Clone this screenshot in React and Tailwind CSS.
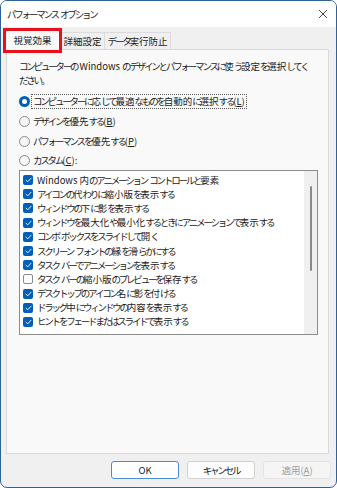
import { useState } from "react";

const items = [
  { label: "Windows 内のアニメーション コントロールと要素", on: true },
  { label: "アイコンの代わりに縮小版を表示する", on: true },
  { label: "ウィンドウの下に影を表示する", on: true },
  { label: "ウィンドウを最大化や最小化するときにアニメーションで表示する", on: true },
  { label: "コンボ ボックスをスライドして開く", on: true },
  { label: "スクリーン フォントの縁を滑らかにする", on: true },
  { label: "タスク バーでアニメーションを表示する", on: true },
  { label: "タスク バーの縮小版のプレビューを保存する", on: false },
  { label: "デスクトップのアイコン名に影を付ける", on: true },
  { label: "ドラッグ中にウィンドウの内容を表示する", on: true },
  { label: "ヒントをフェードまたはスライドで表示する", on: true },
];

const radios = [
  { label: "コンピューターに応じて最適なものを自動的に選択する", key: "L" },
  { label: "デザインを優先する", key: "B" },
  { label: "パフォーマンスを優先する", key: "P" },
  { label: "カスタム", key: "C", colon: true },
];

// かな部分だけ詰める (Yu Gothic UI のかなは幅が狭い)
function JP({ text }) {
  return text.split(/([\u3040-\u30ff。、]+)/).map((part, i) =>
    /^[\u3040-\u30ff。、]+$/.test(part) ? (
      <span key={i} className="tracking-[-2.2px]">
        {part}
      </span>
    ) : (
      part
    )
  );
}

function Radio({ checked }) {
  if (checked) {
    return (
      <span className="flex h-[11px] w-[11px] shrink-0 items-center justify-center rounded-full bg-[#005fb8]">
        <span className="h-[5px] w-[5px] rounded-full bg-white" />
      </span>
    );
  }
  return <span className="h-[11px] w-[11px] shrink-0 rounded-full border border-[#8a8a8a] bg-[#f6f6f6]" />;
}

function Check({ on }) {
  if (!on) {
    return <span className="h-[10px] w-[10px] shrink-0 rounded-[2px] border border-[#8a8a8a] bg-[#fbfbfb]" />;
  }
  return (
    <span className="flex h-[10px] w-[10px] shrink-0 items-center justify-center rounded-[2px] bg-[#005fb8]">
      <svg width="7" height="6" viewBox="0 0 7 6" fill="none">
        <path d="M1 3.2 L2.8 4.8 L6 1.2" stroke="white" strokeWidth="0.9" strokeLinecap="round" strokeLinejoin="round" />
      </svg>
    </span>
  );
}

export default function App() {
  const [mode, setMode] = useState(0);
  const [checks, setChecks] = useState(items.map((it) => it.on));

  return (
    <div className="h-[488px] w-[337px] bg-white font-['Noto_Sans_CJK_JP',sans-serif] text-[9.5px] text-[#1b1b1b]">
      <div className="relative flex h-full w-full flex-col overflow-hidden rounded-[7px] border border-[#2f6296] bg-[#f0f0f0]">
        {/* タイトルバー */}
        <div className="flex h-[26px] shrink-0 items-center justify-between bg-white pl-[6px] pr-[8px]">
          <span>
            <JP text="パフォーマンス オプション" />
          </span>
          <svg width="10" height="10" viewBox="0 0 10 10">
            <path d="M1 1 L9 9 M9 1 L1 9" stroke="#333" strokeWidth="0.9" />
          </svg>
        </div>

        {/* タブ */}
        <div className="flex h-[22px] shrink-0 items-end pl-[3px]">
          <div className="relative z-10 -mb-px flex h-[21px] w-[57px] items-center justify-center border border-b-0 border-[#d9d9d9] bg-[#f9f9f9]">
            視覚効果
          </div>
          <div className="flex h-[17px] w-[44px] items-center justify-center border border-b-0 border-l-0 border-[#dcdcdc] bg-[#f0f0f0]">
            詳細設定
          </div>
          <div className="flex h-[17px] w-[66px] items-center justify-center border border-b-0 border-l-0 border-[#dcdcdc] bg-[#f0f0f0]">
            <JP text="データ実行防止" />
          </div>
        </div>

        {/* 赤枠の注記 */}
        <div className="pointer-events-none absolute left-[2px] top-[27px] z-20 h-[25px] w-[59px] border-[3px] border-[#e8111b]" />

        {/* パネル */}
        <div className="ml-[5px] flex h-[405px] w-[323px] shrink-0 flex-col border border-[#d9d9d9] bg-[#f9f9f9] pl-[12px] pt-[9px]">
          <p className="w-[294px] leading-[14px]">
            <JP text="コンピューターの Windows のデザインとパフォーマンスに使う設定を選択してください。" />
          </p>

          <div className="mt-[4px] flex flex-col">
            {radios.map((r, i) => (
              <button
                key={r.key}
                onClick={() => setMode(i)}
                className={`flex items-center gap-[2px] text-left ${i === 3 ? "h-[19px]" : "h-[20px]"}`}
              >
                <Radio checked={mode === i} />
                <span
                  className={`px-px leading-[13px] ${
                    mode === i && i === 0 ? "outline outline-1 outline-dotted outline-[#555]" : ""
                  }`}
                >
                  <JP text={r.label} />(<span className="underline">{r.key}</span>){r.colon ? ":" : ""}
                </span>
              </button>
            ))}
          </div>

          {/* リストボックス */}
          <div className="flex h-[165px] w-[299px] border border-[#8d8d8d] bg-white">
            <div className="flex flex-1 flex-col pl-[3px] pt-[2px]">
              {items.map((it, i) => (
                <button
                  key={it.label}
                  onClick={() => setChecks(checks.map((c, j) => (j === i ? !c : c)))}
                  className="flex h-[14.2px] shrink-0 items-center gap-[4px] text-left"
                >
                  <Check on={checks[i]} />
                  <span className="leading-[13px]">
                    <JP text={it.label} />
                  </span>
                </button>
              ))}
            </div>
            <div className="flex w-[13px] shrink-0 justify-center bg-[#f0f0f0] pt-[15px]">
              <div className="h-[85px] w-[2px] rounded-full bg-[#8a8a8a]" />
            </div>
          </div>
        </div>

        {/* ボタン */}
        <div className="mt-[7px] flex justify-end gap-[8px] pr-[5px]">
          <button className="h-[18px] w-[68px] rounded-[3px] border border-[#4a8ad4] bg-white">OK</button>
          <button className="h-[18px] w-[68px] rounded-[3px] border border-[#d0d0d0] bg-[#fdfdfd]">
            <JP text="キャンセル" />
          </button>
          <button className="h-[18px] w-[68px] rounded-[3px] border border-[#e3e3e3] bg-[#f5f5f5] text-[#a0a0a0]">
            適用(<span className="underline">A</span>)
          </button>
        </div>
      </div>
    </div>
  );
}
